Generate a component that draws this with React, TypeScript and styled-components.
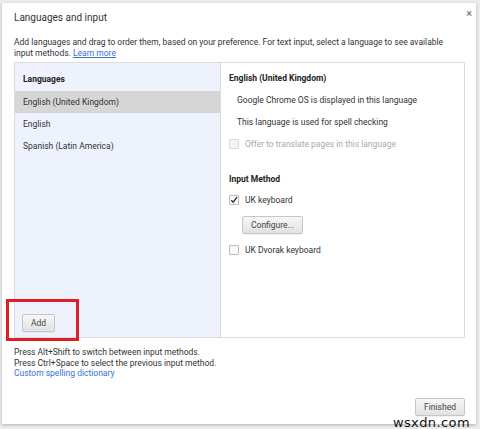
import React from 'react';
import styled, { createGlobalStyle } from 'styled-components';

const Global = createGlobalStyle`
  html, body {
    margin: 0;
    padding: 0;
    background: #ececec;
    font-family: Roboto, "Noto Sans", Arial, sans-serif;
  }
`;

const Page = styled.div`
  width: 480px;
  height: 429px;
  padding: 3px 4px 5px 2px;
  box-sizing: border-box;
  overflow: hidden;
`;

const Dialog = styled.div`
  position: relative;
  height: 421px;
  background: #fff;
  box-shadow: 0 1px 3px rgba(0, 0, 0, 0.25);
  padding: 0 10px 0 12px;
  box-sizing: border-box;
  display: flex;
  flex-direction: column;
  color: #333;
`;

const Header = styled.div`
  display: flex;
  justify-content: space-between;
  align-items: flex-start;
  padding-top: 9px;
  height: 19px;
`;

const Title = styled.div`
  font-size: 10px;
  color: #333;
`;

const Close = styled.div`
  font-size: 11px;
  color: #666;
  margin-right: -6px;
  margin-top: -5px;
`;

const Description = styled.p`
  margin: 6px 0 0;
  font-size: 8.5px;
  line-height: 11px;
  color: #333;
`;

const Link = styled.a<{ $underline?: boolean }>`
  color: #3a6fd8;
  text-decoration: ${p => (p.$underline ? 'underline' : 'none')};
`;

const Panels = styled.div`
  margin-top: 3px;
  height: 276px;
  border: 1px solid #dcdcdc;
  display: grid;
  grid-template-columns: 206px 1fr;
  width: 451px;
  box-sizing: border-box;
`;

const LangList = styled.div`
  background: #eef2fc;
  border-right: 1px solid #dcdcdc;
  display: flex;
  flex-direction: column;
  position: relative;
`;

const ListHeader = styled.div`
  font-size: 8.5px;
  font-weight: bold;
  color: #222;
  padding: 11px 8px 7px;
`;

const LangRow = styled.div<{ $selected?: boolean }>`
  font-size: 8.5px;
  color: #333;
  height: 22px;
  line-height: 22px;
  padding: 0 8px;
  background: ${p => (p.$selected ? '#d6d6d6' : 'transparent')};
`;

const AddArea = styled.div`
  margin-top: auto;
  padding: 0 0 5px 7px;
  position: relative;
`;

const Button = styled.button`
  font-family: inherit;
  font-size: 8.5px;
  color: #444;
  background: linear-gradient(#f7f7f7, #e2e2e2);
  border: 1px solid #c6c6c6;
  border-radius: 2px;
  padding: 0 8px;
  height: 18px;
  box-shadow: 0 1px 0 rgba(0, 0, 0, 0.05);
`;

const Highlight = styled.div`
  position: absolute;
  left: -9px;
  top: -12px;
  width: 67px;
  height: 36px;
  border: 3px solid #dc1f26;
  pointer-events: none;
`;

const Detail = styled.div`
  padding: 10px 8px;
  display: flex;
  flex-direction: column;
`;

const SectionTitle = styled.div<{ $gap?: number }>`
  font-size: 8.5px;
  font-weight: bold;
  color: #222;
  margin-top: ${p => p.$gap ?? 0}px;
`;

const Info = styled.div<{ $first?: boolean }>`
  font-size: 8.5px;
  color: #333;
  padding-left: 8px;
  height: 22px;
  line-height: 22px;
  margin-top: ${p => (p.$first ? 6 : 0)}px;
`;

const CheckRow = styled.div<{ $disabled?: boolean; $gap?: number }>`
  display: flex;
  align-items: center;
  gap: 6px;
  height: 22px;
  font-size: 8.5px;
  margin-top: ${p => p.$gap ?? 0}px;
  color: ${p => (p.$disabled ? '#aaa' : '#333')};
`;

const Box = styled.span<{ $disabled?: boolean }>`
  width: 8px;
  height: 8px;
  border: 1px solid ${p => (p.$disabled ? '#d8d8d8' : '#bbb')};
  border-radius: 1px;
  background: ${p => (p.$disabled ? '#f4f4f4' : '#fafafa')};
  display: inline-flex;
  align-items: center;
  justify-content: center;
`;

const ConfigureWrap = styled.div`
  padding: 2px 0 5px 13px;
`;

const Notes = styled.div`
  margin-top: 9px;
  font-size: 8.5px;
  line-height: 10.5px;
  color: #333;
`;

const Footer = styled.div`
  margin-top: auto;
  display: flex;
  justify-content: flex-end;
  padding: 0 0 8px;
  margin-right: 1px;
`;

const Watermark = styled.div`
  position: absolute;
  right: 6px;
  bottom: -4px;
  font-family: "DejaVu Sans", sans-serif;
  font-size: 13px;
  letter-spacing: 0.4px;
  color: #111;
  line-height: 11px;
`;

const Check = () => (
  <svg width="8" height="8" viewBox="0 0 8 8">
    <path d="M1.2 4.2 L3.2 6.2 L7 1.2" fill="none" stroke="#333" strokeWidth="1.4" />
  </svg>
);

export default function App() {
  return (
    <Page>
      <Global />
      <Dialog>
        <Header>
          <Title>Languages and input</Title>
          <Close>×</Close>
        </Header>
        <Description>
          Add languages and drag to order them, based on your preference. For text input, select a language to see available
          <br />
          input methods. <Link href="#" $underline>Learn more</Link>
        </Description>
        <Panels>
          <LangList>
            <ListHeader>Languages</ListHeader>
            <LangRow $selected>English (United Kingdom)</LangRow>
            <LangRow>English</LangRow>
            <LangRow>Spanish (Latin America)</LangRow>
            <AddArea>
              <Button>Add</Button>
              <Highlight />
            </AddArea>
          </LangList>
          <Detail>
            <SectionTitle>English (United Kingdom)</SectionTitle>
            <Info $first>Google Chrome OS is displayed in this language</Info>
            <Info>This language is used for spell checking</Info>
            <CheckRow $disabled>
              <Box $disabled />
              Offer to translate pages in this language
            </CheckRow>
            <SectionTitle $gap={19}>Input Method</SectionTitle>
            <CheckRow $gap={5}>
              <Box>
                <Check />
              </Box>
              UK keyboard
            </CheckRow>
            <ConfigureWrap>
              <Button>Configure...</Button>
            </ConfigureWrap>
            <CheckRow>
              <Box />
              UK Dvorak keyboard
            </CheckRow>
          </Detail>
        </Panels>
        <Notes>
          Press Alt+Shift to switch between input methods.
          <br />
          Press Ctrl+Space to select the previous input method.
          <br />
          <Link href="#">Custom spelling dictionary</Link>
        </Notes>
        <Footer>
          <Button>Finished</Button>
        </Footer>
        <Watermark>wsxdn.com</Watermark>
      </Dialog>
    </Page>
  );
}
